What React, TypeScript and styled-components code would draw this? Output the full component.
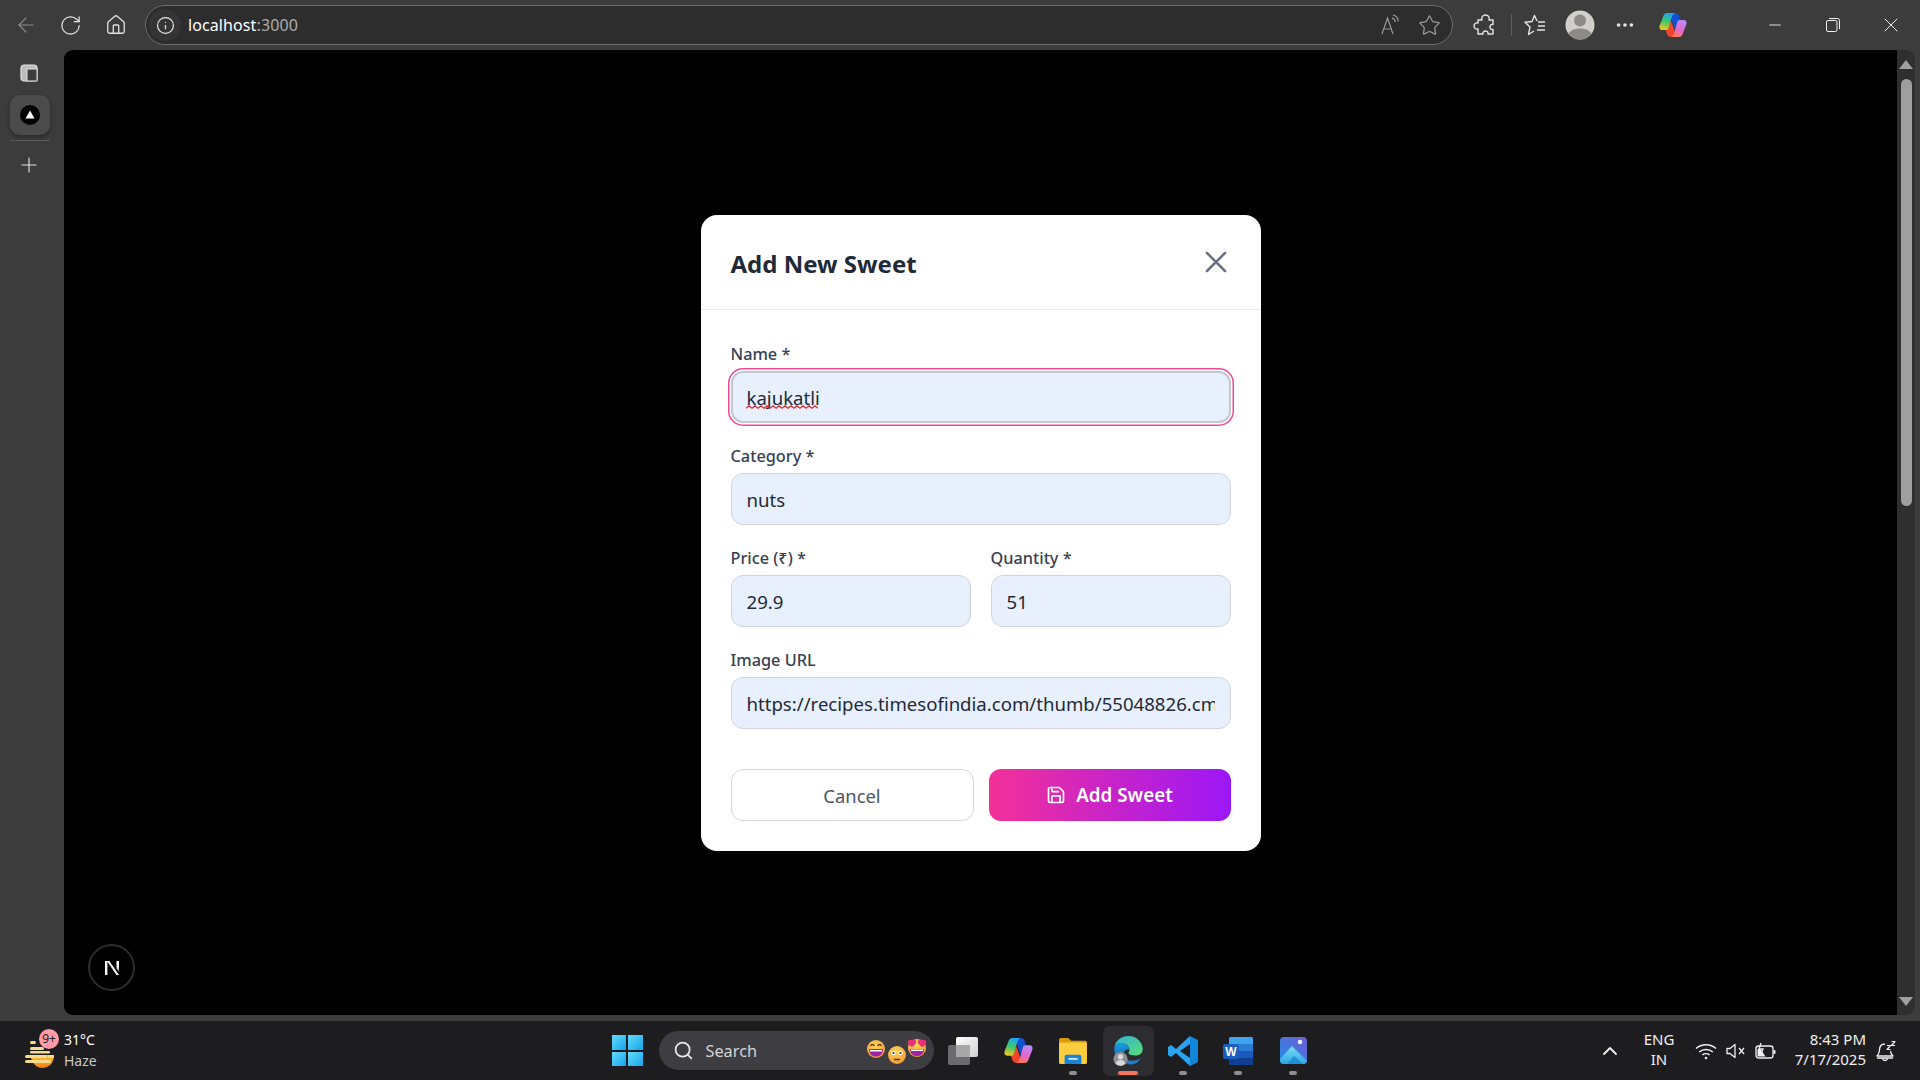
import React from 'react';
import styled, { createGlobalStyle } from 'styled-components';
import { ArrowLeft, RotateCw, Home, Info, Plus, Star, MoreHorizontal, Minus, X, Save, Search, ChevronUp } from 'lucide-react';

const GlobalStyle = createGlobalStyle`
  html, body { margin: 0; padding: 0; background: #3b3b3b; overflow: hidden; }
  * { box-sizing: border-box; }
  body { font-family: "Noto Sans", "Open Sans", sans-serif; }
`;

const Screen = styled.div`
  width: 1920px;
  height: 1080px;
  display: flex;
  flex-direction: column;
  background: #3c3c3c;
`;

const TopBar = styled.header`
  height: 50px;
  flex: none;
  display: flex;
  align-items: center;
  padding-left: 6px;
  color: #e6e6e6;
`;

const NavButton = styled.span<{ $dim?: boolean }>`
  width: 45px;
  height: 36px;
  margin-left: ${(p) => (p.$dim ? '-3px' : '0')};
  display: flex;
  align-items: center;
  justify-content: center;
  color: ${(p) => (p.$dim ? '#8a8a8a' : '#e4e4e4')};
`;

const AddressBar = styled.div`
  width: 1308px;
  height: 40px;
  margin-left: 7px;
  display: flex;
  align-items: center;
  border: 1px solid #6c6c6c;
  border-radius: 20px;
  background: #2d2d2d;
  padding: 0 11px 0 3px;
`;

const SiteInfo = styled.span`
  width: 32px;
  height: 32px;
  border-radius: 50%;
  background: #353535;
  display: flex;
  align-items: center;
  justify-content: center;
  color: #e4e4e4;
`;

const Url = styled.span`
  margin-left: 7px;
  font-size: 16px;
  letter-spacing: 0.1px;
  color: #fff;
  flex: 1;
  & > span { color: #ababab; }
`;

const AddressTools = styled.div`
  display: flex;
  align-items: center;
  gap: 15px;
  color: #9a9a9a;
`;

const ToolGroup = styled.div`
  display: flex;
  align-items: center;
  margin-left: 12px;
  color: #e4e4e4;
`;

const ToolButton = styled.span<{ $w: number }>`
  width: ${(p) => p.$w}px;
  height: 36px;
  display: flex;
  align-items: center;
  justify-content: center;
`;

const ToolDivider = styled.span`
  width: 1px;
  height: 22px;
  background: #5e5e5e;
  margin: 0 8px 0 6px;
`;

const WindowControls = styled.div`
  margin-left: auto;
  display: flex;
  align-items: center;
  color: #f0f0f0;
`;

const WindowButton = styled.span`
  width: 58px;
  height: 36px;
  display: flex;
  align-items: center;
  justify-content: center;
`;

const Middle = styled.div`
  flex: 1;
  min-height: 0;
  display: flex;
  padding-right: 5px;
  padding-bottom: 6px;
`;

const SideRail = styled.aside`
  width: 64px;
  flex: none;
  display: flex;
  flex-direction: column;
  align-items: center;
  padding: 11px 4px 0 0;
  color: #e4e4e4;
`;

const SideIcon = styled.span`
  width: 40px;
  height: 24px;
  margin-left: -2px;
  display: flex;
  align-items: center;
  justify-content: center;
`;

const SideTab = styled.span`
  width: 40px;
  height: 40px;
  margin-top: 10px;
  border-radius: 10px;
  background: #4b4b4b;
  box-shadow: 0 2px 5px rgba(0, 0, 0, 0.35);
  display: flex;
  align-items: center;
  justify-content: center;
`;

const SideRule = styled.span`
  width: 40px;
  height: 1px;
  background: #5a5a5a;
  margin: 5px 0 12px;
`;

const Viewport = styled.main`
  position: relative;
  flex: 1;
  min-width: 0;
  background: #000;
  border-radius: 9px 0 0 9px;
  padding-top: 1px;
  display: flex;
  align-items: center;
  justify-content: center;
`;

const Scrollbar = styled.div`
  width: 18px;
  flex: none;
  background: #2f2f2f;
  border-radius: 0 9px 9px 0;
  display: flex;
  flex-direction: column;
  align-items: center;
  padding: 10px 0 9px;
`;

const ScrollArrow = styled.span<{ $down?: boolean }>`
  width: 0;
  height: 0;
  border-left: 7px solid transparent;
  border-right: 7px solid transparent;
  ${(p) => (p.$down ? 'border-top: 9px solid #a0a0a0; margin-top: auto;' : 'border-bottom: 9px solid #a0a0a0;')}
`;

const ScrollThumb = styled.span`
  width: 11px;
  height: 427px;
  margin-top: 10px;
  border-radius: 6px;
  background: #9f9f9f;
`;

const DevBadge = styled.span`
  position: absolute;
  left: 24px;
  bottom: 24px;
  width: 47px;
  height: 47px;
  border-radius: 50%;
  background: #000;
  border: 2px solid #2e2e2e;
  display: flex;
  align-items: center;
  justify-content: center;
`;

const Modal = styled.form`
  width: 560px;
  background: #fff;
  border-radius: 16px;
  display: flex;
  flex-direction: column;
`;

const ModalHeader = styled.div`
  height: 95px;
  padding: 0 30px;
  border-bottom: 1px solid #e5e7eb;
  display: flex;
  align-items: center;
  justify-content: space-between;
`;

const ModalTitle = styled.h2`
  margin: 3px 0 0;
  font-size: 24px;
  line-height: 32px;
  font-weight: 700;
  color: #1f2937;
`;

const CloseButton = styled.span`
  color: #6b7280;
  display: flex;
  margin: 0 -3px 0 0;
`;

const ModalBody = styled.div`
  padding: 31px 30px 30px;
  display: flex;
  flex-direction: column;
  gap: 20px;
`;

const FieldRow = styled.div`
  display: grid;
  grid-template-columns: 1fr 1fr;
  gap: 20px;
`;

const Field = styled.label`
  display: flex;
  flex-direction: column;
  gap: 8px;
  min-width: 0;
`;

const FieldLabel = styled.span`
  font-size: 16.3px;
  line-height: 26px;
  font-weight: 500;
  color: #374151;
  height: 22px;
`;

const InputWrap = styled.span`
  position: relative;
  display: block;
`;

const Squiggle = styled.svg`
  position: absolute;
  left: 15px;
  top: 34px;
`;

const TextInput = styled.input<{ $focused?: boolean }>`
  display: block;
  width: 100%;
  height: 52px;
  padding: 0 15px;
  border: 1px solid #d1d5db;
  border-radius: 12px;
  background: #e8f0fe;
  font-family: inherit;
  font-size: 18.6px;
  color: #1f2937;
  outline: none;
  ${(p) => p.$focused && 'border: 2px solid #c3c8d0; padding: 0 14px; box-shadow: 0 0 0 1.5px #fff, 0 0 0 3px #ec4899;'}
`;

const Actions = styled.div`
  display: grid;
  grid-template-columns: 243px 1fr;
  gap: 15px;
  margin-top: 20px;
`;

const CancelButton = styled.button`
  height: 52px;
  border: 1px solid #d1d5db;
  border-radius: 12px;
  background: #fff;
  font-family: inherit;
  font-size: 18.4px;
  font-weight: 400;
  color: #4b5563;
`;

const SubmitButton = styled.button`
  height: 52px;
  border: 0;
  border-radius: 12px;
  background: linear-gradient(90deg, #f43098, #9c17f7);
  font-family: inherit;
  font-size: 18.8px;
  font-weight: 600;
  color: #fff;
  display: flex;
  align-items: center;
  justify-content: center;
  gap: 10px;
`;

const Taskbar = styled.footer`
  height: 59px;
  flex: none;
  background: #1d1d20;
  display: grid;
  grid-template-columns: 1fr auto 1fr;
  align-items: center;
  color: #fff;
`;

const Weather = styled.div`
  display: flex;
  align-items: center;
  padding-left: 24px;
  position: relative;
`;

const WeatherCount = styled.span`
  position: absolute;
  left: 39px;
  top: -2px;
  width: 20px;
  height: 20px;
  border-radius: 50%;
  background: #ff9aa6;
  color: #1e1e20;
  font-size: 12px;
  line-height: 20px;
  text-align: center;
`;

const WeatherText = styled.div`
  margin: -2px 0 0 8px;
  font-size: 14px;
  line-height: 21px;
  & > div + div { color: #c8c8c8; }
`;

const TaskIcons = styled.div`
  display: flex;
  align-items: center;
  height: 59px;
  margin-left: 12px;
`;

const StartButton = styled.span`
  width: 31px;
  height: 31px;
  margin-right: 16px;
  display: grid;
  grid-template-columns: 1fr 1fr;
  gap: 2px;
`;

const StartPane = styled.span`
  background: linear-gradient(135deg, #62dcfb, #17a3ea);
`;

const SearchPill = styled.div`
  width: 275px;
  height: 39px;
  border-radius: 20px;
  background: #3e3e42;
  display: flex;
  align-items: center;
  padding-left: 14px;
  position: relative;
  margin-right: 2px;
  color: #e8e8e8;
`;

const SearchText = styled.span`
  margin-left: 12px;
  font-size: 16.3px;
  color: #d4d4d4;
`;

const EmojiRow = styled.span`
  position: absolute;
  right: 7px;
  top: 6px;
`;

const TaskButton = styled.span<{ $active?: boolean; $dot?: boolean }>`
  position: relative;
  width: 55px;
  height: 50px;
  display: flex;
  align-items: center;
  justify-content: center;
  border: 0 solid transparent;
  border-width: 0 2px;
  border-radius: 8px;
  background-clip: padding-box;
  ${(p) => p.$active && 'background-color: #2c2c31;'}
  &::after {
    content: '';
    display: ${(p) => (p.$dot || p.$active ? 'block' : 'none')};
    position: absolute;
    bottom: 1px;
    left: 50%;
    transform: translateX(-50%);
    width: ${(p) => (p.$active ? '20px' : '8px')};
    height: 4px;
    border-radius: 2px;
    background: ${(p) => (p.$active ? '#f0775e' : '#8f8f8f')};
  }
`;

const Tray = styled.div`
  display: flex;
  align-items: center;
  justify-content: flex-end;
  color: #f0f0f0;
`;

const TrayLang = styled.div`
  width: 50px;
  margin: -4px 7px 0 12px;
  text-align: center;
  font-size: 15px;
  line-height: 20px;
`;

const TrayIcon = styled.span`
  width: 30px;
  display: flex;
  justify-content: center;
`;

const Clock = styled.div`
  width: 90px;
  margin: -4px 0 0 -5px;
  text-align: right;
  font-size: 15px;
  line-height: 20px;
`;

const BellSlot = styled.span`
  width: 54px;
  padding-left: 10px;
  display: flex;
`;

const SidebarGlyph = () => (
  <svg width="18" height="18" viewBox="0 0 18 18" fill="none">
    <rect x="1" y="1" width="16" height="16" rx="3" stroke="#e4e4e4" strokeWidth="1.2" />
    <path d="M1 4a3 3 0 0 1 3-3h10a3 3 0 0 1 3 3v1H7v12H4a3 3 0 0 1-3-3z" fill="#e4e4e4" fillOpacity=".75" />
    <rect x="7" y="5" width="10" height="12" fill="#3c3c3c" />
    <rect x="7" y="5" width="10" height="12" stroke="#e4e4e4" strokeWidth="1" />
  </svg>
);

const TabFavicon = () => (
  <svg width="20" height="20" viewBox="0 0 20 20">
    <circle cx="10" cy="10" r="10" fill="#000" />
    <path d="M10 5.500 14.500 13.500H5.500z" fill="#fff" />
  </svg>
);

const ReadAloud = () => (
  <svg width="24" height="24" viewBox="0 0 24 24" fill="none" stroke="#9a9a9a" strokeWidth="1.2">
    <path d="M3 21 8.500 5 14 21M5 16h7" />
    <path d="M13 5c2 .5 3 2 3.200 4M14 2c3 .6 5 3 5.300 6.500" />
  </svg>
);

const ExtensionsGlyph = () => (
  <svg width="24" height="24" viewBox="0 0 24 24" fill="none" stroke="#e4e4e4" strokeWidth="1.400" strokeLinejoin="round">
    <path d="M9 7c-1-3 1-5 3.500-5S17 4 16 7h4v4.500c-2-.5-3 1-3 2.500s1 3 3 2.500V21h-5c.5-2-1-3-2.500-3S9.500 19 10 21H5v-5c-3 .5-4-1.500-4-3s1-3.500 4-3V7z" />
  </svg>
);

const FavoritesGlyph = () => (
  <svg width="24" height="24" viewBox="0 0 24 24" fill="none" stroke="#e4e4e4" strokeWidth="1.400" strokeLinejoin="round">
    <path d="M14 8 11.500 2.500 9 8.500 2 9.300l5 4.700L5.500 21.500l5.500-3.500" />
    <path d="M15 9h7M15 13h7M14 17h8" />
  </svg>
);

const Avatar = () => (
  <svg width="30" height="30" viewBox="0 0 30 30">
    <circle cx="15" cy="15" r="14.500" fill="#d0cfca" />
    <circle cx="15" cy="10.500" r="6" fill="#8c8b87" />
    <path d="M3.500 24c2-4 6.500-5.500 11.500-5.500S24.500 20 26.500 24c-3 3.500-7 5.500-11.500 5.500S6.500 27.500 3.500 24z" fill="#8c8b87" />
  </svg>
);

const Copilot = ({ id, width }: { id: string; width: number }) => (
  <svg width={width} height={width * 0.93} viewBox="0 0 28 26">
    <defs>
      <linearGradient id={`${id}l`} x1="0.6" y1="0" x2="0.3" y2="1">
        <stop offset="0" stopColor="#22a2f5" />
        <stop offset=".5" stopColor="#38c96c" />
        <stop offset="1" stopColor="#f6c71f" />
      </linearGradient>
      <linearGradient id={`${id}r`} x1="0.6" y1="0" x2="0.3" y2="1">
        <stop offset="0" stopColor="#b98af7" />
        <stop offset=".6" stopColor="#e868c8" />
        <stop offset="1" stopColor="#ff7a4a" />
      </linearGradient>
    </defs>
    <path d="M16 1c2 0 3.500 1 4 3l2 6c-2 0-3 1-3.500 3L16 17l-4-11c.5-2 1.500-4 4-5z" fill="#1450d2" />
    <path d="M12 25c-2 0-3.500-1-4-3l-2-6c2 0 3-1 3.500-3L12 9l4 11c-.5 2-1.500 4-4 5z" fill="#f0452c" />
    <path d="M8 1h8c-2 1-3 3-3.500 5L10 15c-.5 2-1 3-3 3H3C1 18 0 16 .5 14L4 5c1-3 2-4 4-4z" fill={`url(#${id}l)`} />
    <path d="M20 25h-8c2-1 3-3 3.500-5L18 11c.5-2 1-3 3-3h4c2 0 3 2 2.500 4L24 21c-1 3-2 4-4 4z" fill={`url(#${id}r)`} />
  </svg>
);

const NextMark = () => (
  <svg width="20" height="20" viewBox="0 0 20 20">
    <defs>
      <linearGradient id="nx" x1="0" y1="0" x2="0" y2="1">
        <stop offset=".5" stopColor="#fff" />
        <stop offset="1" stopColor="#777" />
      </linearGradient>
    </defs>
    <path d="M3 3h2.400v14H3zM5 3h2.400L17 17h-2.600z" fill="#f4f4f4" />
    <path d="M14.500 3H17v11l-2.500-3.500z" fill="url(#nx)" />
  </svg>
);

const WeatherIcon = () => (
  <svg width="32" height="36" viewBox="0 0 32 36">
    <defs>
      <linearGradient id="sun" x1="0" y1="0" x2="0" y2="1">
        <stop offset="0" stopColor="#fcc43a" />
        <stop offset="1" stopColor="#f47c0f" />
      </linearGradient>
    </defs>
    <path d="M6 22h24c0 8-5 13-12 13-6 0-10-5-12-13z" fill="url(#sun)" />
    <g fill="#f5dc8c">
      <rect x="6" y="8" width="6" height="3" rx="1.500" />
      <rect x="6" y="14" width="14" height="3" rx="1.500" />
      <rect x="6" y="18" width="20" height="2.500" rx="1.250" />
      <rect x="1" y="22" width="22" height="3" rx="1.500" />
      <rect x="24" y="22" width="6" height="3" rx="1.500" />
      <rect x="1" y="27" width="26" height="3" rx="1.500" />
    </g>
  </svg>
);

const Emojis = () => (
  <svg width="60" height="30" viewBox="0 0 60 30" fill="none">
    <defs>
      <radialGradient id="face" cx=".45" cy=".3" r=".85">
        <stop offset="0" stopColor="#ffd65a" />
        <stop offset="1" stopColor="#f0902c" />
      </radialGradient>
    </defs>
    <circle cx="9" cy="12" r="9" fill="url(#face)" />
    <path d="M2 12h14c0 5-3 7.500-7 7.500S2 17 2 12z" fill="#a020a8" />
    <path d="M3 13h12v1.500H3z" fill="#fff" />
    <path d="M3.500 9c1-2 3-2 4 0M10.500 9c1-2 3-2 4 0" stroke="#5c3a20" strokeWidth="1.300" />
    <circle cx="30" cy="18" r="9" fill="url(#face)" />
    <circle cx="26.500" cy="16" r="2.200" fill="#fff" />
    <circle cx="33.500" cy="16" r="2.200" fill="#fff" />
    <circle cx="26.500" cy="16" r="1.100" fill="#3a2a20" />
    <circle cx="33.500" cy="16" r="1.100" fill="#3a2a20" />
    <path d="M27 22.500h6" stroke="#5c3a20" strokeWidth="1.500" />
    <circle cx="50" cy="11" r="9" fill="url(#face)" />
    <path d="M45 3c2-1.500 4.500 0 4 2.500-.3 1.500-2 3-4 4.500-2-1-4-2.500-4.300-4.500C40.500 3.500 43 2 45 3zM55 3c2-1 4.500.5 4.300 2.500-.3 2-2.300 3.500-4.300 4.500-2-1.500-3.700-3-4-4.500C50.500 3 53 1.500 55 3z" fill="#ec2f76" />
    <path d="M43 12h14c0 4.500-3 7-7 7s-7-2.500-7-7z" fill="#a020a8" />
    <path d="M44 12.500h12v1.500H44z" fill="#fff" />
  </svg>
);

const TaskView = () => (
  <svg width="30" height="28" viewBox="0 0 30 28">
    <defs>
      <linearGradient id="tv" x1="0" y1="0" x2="1" y2="1">
        <stop offset="0" stopColor="#ffffff" />
        <stop offset="1" stopColor="#d0d0d0" />
      </linearGradient>
    </defs>
    <rect x="8" y="0" width="22" height="20" rx="2" fill="url(#tv)" />
    <rect x="0" y="8" width="22" height="20" rx="2" fill="#6b6b6b" />
    <path d="M8 8h14v12H8z" fill="#a8a8a8" />
  </svg>
);

const Explorer = () => (
  <svg width="30" height="27" viewBox="0 0 32 29">
    <path d="M1 3a2 2 0 0 1 2-2h8l3 3h15a2 2 0 0 1 2 2v4H1z" fill="#d99a0b" />
    <rect x="1" y="6" width="30" height="23" rx="1.500" fill="#fbcd3f" />
    <path d="M7 21a2 2 0 0 1 2-2h14a2 2 0 0 1 2 2v8H7z" fill="#1683d8" />
    <rect x="11" y="22.500" width="10" height="2" fill="#fff" fillOpacity=".8" />
  </svg>
);

const Edge = () => (
  <svg width="31" height="32" viewBox="0 0 34 36">
    <defs>
      <linearGradient id="ed1" x1="0" y1="0" x2="1" y2="1">
        <stop offset="0" stopColor="#2fb2dc" />
        <stop offset="1" stopColor="#5ade72" />
      </linearGradient>
      <linearGradient id="ed2" x1="0" y1="0" x2="0" y2="1">
        <stop offset="0" stopColor="#1b9de2" />
        <stop offset="1" stopColor="#0c59a4" />
      </linearGradient>
    </defs>
    <path d="M17 1C26 1 33 8 33 16c0 5-4 7-9 7-4 0-7-1-7-3 0-1 1-1.500 1-3.500C18 12 13 9 9 9 5 9 2 11 1 14 2 7 8 1 17 1z" fill="url(#ed1)" />
    <path d="M1 14c1-3 4-5 8-5 4 0 8 3 9 7-4 0-8 3-8 8 0 4 3 8 8 9C8 33 1 25 1 17z" fill="url(#ed2)" />
    <path d="M18 33c-5-1-8-5-8-9 2 3 6 5 11 5 4 0 8-1 10-3-3 5-8 8-13 7z" fill="#1c7cd0" />
    <circle cx="8" cy="27" r="8" fill="#8f8f8f" />
    <circle cx="8" cy="24.500" r="3" fill="#d8d8d8" />
    <path d="M2.500 32c1-3 3-4 5.500-4s4.500 1 5.500 4c-1.500 1.500-3.500 2.500-5.500 2.500S4 33.500 2.500 32z" fill="#d8d8d8" />
  </svg>
);

const VsCode = () => (
  <svg width="30" height="30" viewBox="0 0 30 30">
    <path d="M22 0 8 13 3 9 0 11v8l3 2 5-4 14 13v-8L12 15l10-7z" fill="#2aa4f0" />
    <path d="M22 0l8 4v22l-8 4z" fill="#0f86d8" />
  </svg>
);

const Word = () => (
  <svg width="30" height="28" viewBox="0 0 30 28">
    <rect x="6" y="0" width="24" height="28" rx="2" fill="#2b7cd3" />
    <path d="M8 0h20a2 2 0 0 1 2 2v5H6V2a2 2 0 0 1 2-2z" fill="#41a5ee" />
    <rect x="6" y="14" width="24" height="7" fill="#185abd" />
    <path d="M6 21h24v5a2 2 0 0 1-2 2H8a2 2 0 0 1-2-2z" fill="#103f91" />
    <rect x="0" y="7" width="16" height="15" rx="2" fill="#1a5fbf" />
    <text x="8" y="19" textAnchor="middle" fontFamily="Liberation Sans" fontWeight="700" fontSize="12" fill="#fff">W</text>
  </svg>
);

const Photos = () => (
  <svg width="27" height="27" viewBox="0 0 27 27">
    <defs>
      <linearGradient id="ph" x1="0" y1="1" x2="1" y2="0">
        <stop offset="0" stopColor="#1e90e8" />
        <stop offset="1" stopColor="#6f5bd0" />
      </linearGradient>
      <linearGradient id="pm" x1="0" y1="0" x2="0" y2="1">
        <stop offset="0" stopColor="#7fdcf5" />
        <stop offset="1" stopColor="#2aa8e4" />
      </linearGradient>
    </defs>
    <rect x="0" y="0" width="27" height="27" rx="4" fill="url(#ph)" />
    <circle cx="20" cy="5" r="2.300" fill="#e8f2fb" />
    <path d="M0 22 12 9l15 15v-1 0a4 4 0 0 1-4 4H4a4 4 0 0 1-4-4z" fill="url(#pm)" />
    <path d="M7 27l7-8 9 8z" fill="#1f8fd8" />
  </svg>
);

const WifiGlyph = () => (
  <svg width="22" height="18" viewBox="0 0 22 18" fill="none" stroke="#f0f0f0" strokeWidth="1.600">
    <path d="M1 6.500c5.500-5 14.500-5 20 0M4.200 10c3.800-3.400 9.800-3.400 13.600 0M7.400 13c2-1.700 5.200-1.700 7.200 0" />
    <circle cx="11" cy="16" r="1.300" fill="#f0f0f0" stroke="none" />
  </svg>
);

const MutedGlyph = () => (
  <svg width="20" height="16" viewBox="0 0 20 16" fill="none" stroke="#f0f0f0" strokeWidth="1.300" strokeLinejoin="round">
    <path d="M1 5.500h3L9 1.500v13L4 10.500H1z" />
    <path d="M13 5l5 6M18 5l-5 6" />
  </svg>
);

const BatteryGlyph = () => (
  <svg width="22" height="18" viewBox="0 0 22 18" fill="none" stroke="#f0f0f0" strokeWidth="1.300">
    <rect x="1" y="4" width="17" height="12" rx="2.500" />
    <rect x="18.500" y="8" width="2" height="4" rx="1" fill="#f0f0f0" stroke="none" />
    <path d="M2.500 14.500V7h3l5 7.500z" fill="#f0f0f0" stroke="none" />
    <path d="M6 1 4 7h4l-2 5" stroke="#f0f0f0" />
  </svg>
);

const BellSnooze = () => (
  <svg width="20" height="22" viewBox="0 0 20 22" fill="none" stroke="#f0f0f0" strokeWidth="1.300" strokeLinejoin="round">
    <path d="M9 4C5.500 4 3.500 6.500 3.500 10c0 3-1 4.500-2.500 6h16c-1.500-1.500-2.500-3-2.500-5" />
    <path d="M6.500 18.500c.5 1.500 1.500 2 2.500 2s2-.5 2.500-2M1 18h16" />
    <path d="M11 5.500h3.500L11 9.500h3.500M15.500 1.500h3.500L15.500 5.500H19" strokeWidth="1.200" />
  </svg>
);

const squiggleSteps = Array.from({ length: 24 }, (_, i) => `L${(i + 1) * 3} ${i % 2 === 0 ? 0.8 : 3.2}`).join(' ');

const App = () => {
  return (
    <Screen>
      <GlobalStyle />
      <TopBar>
        <NavButton $dim><ArrowLeft size={24} strokeWidth={1.2} /></NavButton>
        <NavButton><RotateCw size={23} strokeWidth={1.3} /></NavButton>
        <NavButton><Home size={22} strokeWidth={1.4} /></NavButton>
        <AddressBar>
          <SiteInfo><Info size={19} strokeWidth={1.5} /></SiteInfo>
          <Url>localhost<span>:3000</span></Url>
          <AddressTools>
            <ReadAloud />
            <Star size={23} strokeWidth={1.3} />
          </AddressTools>
        </AddressBar>
        <ToolGroup>
          <ToolButton $w={40}><ExtensionsGlyph /></ToolButton>
          <ToolDivider />
          <ToolButton $w={30}><FavoritesGlyph /></ToolButton>
          <ToolButton $w={60}><Avatar /></ToolButton>
          <ToolButton $w={30}><MoreHorizontal size={22} strokeWidth={2} /></ToolButton>
          <ToolButton $w={66}><Copilot id="cpa" width={28} /></ToolButton>
        </ToolGroup>
        <WindowControls>
          <WindowButton><Minus size={18} strokeWidth={1.2} /></WindowButton>
          <WindowButton>
            <svg width="14" height="14" viewBox="0 0 14 14" fill="none" stroke="#f0f0f0" strokeWidth="1">
              <rect x="0.500" y="2.500" width="10.500" height="11" rx="1.500" />
              <path d="M3 .5h8.500a2 2 0 0 1 2 2V11" />
            </svg>
          </WindowButton>
          <WindowButton><X size={24} strokeWidth={1} /></WindowButton>
        </WindowControls>
      </TopBar>
      <Middle>
        <SideRail>
          <SideIcon><SidebarGlyph /></SideIcon>
          <SideTab><TabFavicon /></SideTab>
          <SideRule />
          <SideIcon><Plus size={24} strokeWidth={1.1} /></SideIcon>
        </SideRail>
        <Viewport>
          <Modal>
            <ModalHeader>
              <ModalTitle>Add New Sweet</ModalTitle>
              <CloseButton><X size={36} strokeWidth={1.7} /></CloseButton>
            </ModalHeader>
            <ModalBody>
              <Field>
                <FieldLabel>Name *</FieldLabel>
                <InputWrap>
                  <TextInput readOnly value="kajukatli" $focused />
                  <Squiggle width="72" height="4" viewBox="0 0 72 4" fill="none" stroke="#e8202a" strokeWidth="1.200">
                    <path d={`M0 3.200 ${squiggleSteps}`} />
                  </Squiggle>
                </InputWrap>
              </Field>
              <Field>
                <FieldLabel>Category *</FieldLabel>
                <TextInput readOnly value="nuts" />
              </Field>
              <FieldRow>
                <Field>
                  <FieldLabel>Price (₹) *</FieldLabel>
                  <TextInput readOnly value="29.9" />
                </Field>
                <Field>
                  <FieldLabel>Quantity *</FieldLabel>
                  <TextInput readOnly value="51" />
                </Field>
              </FieldRow>
              <Field>
                <FieldLabel>Image URL</FieldLabel>
                <TextInput readOnly value="https://recipes.timesofindia.com/thumb/55048826.cms?width=1200&height=900" />
              </Field>
              <Actions>
                <CancelButton type="button">Cancel</CancelButton>
                <SubmitButton type="button"><Save size={20} strokeWidth={2} />Add Sweet</SubmitButton>
              </Actions>
            </ModalBody>
          </Modal>
          <DevBadge><NextMark /></DevBadge>
        </Viewport>
        <Scrollbar>
          <ScrollArrow />
          <ScrollThumb />
          <ScrollArrow $down />
        </Scrollbar>
      </Middle>
      <Taskbar>
        <Weather>
          <WeatherIcon />
          <WeatherCount>9+</WeatherCount>
          <WeatherText>
            <div>31°C</div>
            <div>Haze</div>
          </WeatherText>
        </Weather>
        <TaskIcons>
          <StartButton>
            <StartPane /><StartPane /><StartPane /><StartPane />
          </StartButton>
          <SearchPill>
            <Search size={21} strokeWidth={2} />
            <SearchText>Search</SearchText>
            <EmojiRow><Emojis /></EmojiRow>
          </SearchPill>
          <TaskButton><TaskView /></TaskButton>
          <TaskButton><Copilot id="cpb" width={29} /></TaskButton>
          <TaskButton $dot><Explorer /></TaskButton>
          <TaskButton $active><Edge /></TaskButton>
          <TaskButton $dot><VsCode /></TaskButton>
          <TaskButton $dot><Word /></TaskButton>
          <TaskButton $dot><Photos /></TaskButton>
        </TaskIcons>
        <Tray>
          <ChevronUp size={24} strokeWidth={1.8} />
          <TrayLang>ENG<br />IN</TrayLang>
          <TrayIcon><WifiGlyph /></TrayIcon>
          <TrayIcon><MutedGlyph /></TrayIcon>
          <TrayIcon><BatteryGlyph /></TrayIcon>
          <Clock>8:43 PM<br />7/17/2025</Clock>
          <BellSlot><BellSnooze /></BellSlot>
        </Tray>
      </Taskbar>
    </Screen>
  );
};

export default App;
